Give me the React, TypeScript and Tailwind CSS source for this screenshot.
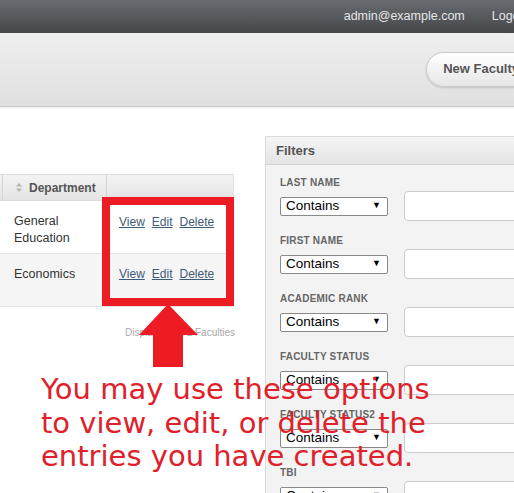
import React from "react";

const filters = ["LAST NAME", "FIRST NAME", "ACADEMIC RANK", "FACULTY STATUS", "FACULTY STATUS2", "TBI"];

function SortIcon() {
  return (
    <svg width="6" height="9" viewBox="0 0 6 9" className="mr-[7px]">
      <polygon points="3,0 6,3.5 0,3.5" fill="#b5b5b5" />
      <polygon points="0,5.5 6,5.5 3,9" fill="#b5b5b5" />
    </svg>
  );
}

function Links() {
  return (
    <div className="flex gap-[7px] text-[12px] leading-[17px] text-[#3d5a77] underline">
      <span>View</span>
      <span>Edit</span>
      <span>Delete</span>
    </div>
  );
}

export default function App() {
  return (
    <div
      className="relative w-[514px] h-[493px] overflow-hidden bg-white"
      style={{ fontFamily: '"Liberation Sans", Arial, sans-serif' }}
    >
      {/* top bar */}
      <div className="h-[33px] bg-gradient-to-b from-[#686c71] to-[#45474a] flex items-center justify-end gap-[27px] mr-[-16px] text-[12.5px] text-[#e6e6e6]">
        <span>admin@example.com</span>
        <span>Logout</span>
      </div>

      {/* header band */}
      <div className="h-[74px] bg-gradient-to-b from-[#efefef] to-[#e0e0e0] border-b border-[#c8c8c8] shadow-[0_1px_2px_rgba(0,0,0,0.08)] flex items-center justify-end mr-[-26px]">
        <div className="h-[35px] mt-[-1px] rounded-[18px] border border-[#c9c9c9] bg-gradient-to-b from-white to-[#e6e6e6] shadow-[0_1px_2px_rgba(0,0,0,0.15)] flex items-center pl-[16px] pr-[20px] text-[13px] font-bold text-[#555]">
          New Faculty
        </div>
      </div>

      {/* main */}
      <div className="flex">
        {/* left: table */}
        <div className="w-[265px] shrink-0 pt-[67px]">
          <div className="w-[234px] border-r border-[#e2e2e2]">
            <div className="flex h-[27px] bg-gradient-to-b from-[#f4f4f4] to-[#e3e3e3] border-y border-[#dcdcdc] text-[12px] font-bold text-[#555]">
              <div className="w-[3px] border-r border-[#d6d6d6]" />
              <div className="w-[104px] flex items-center pl-[13px] border-r border-[#d6d6d6]">
                <SortIcon />
                Department
              </div>
              <div className="flex-1" />
            </div>
            <div className="flex h-[53px] bg-white border-b border-[#e6e6e6]">
              <div className="w-[3px]" />
              <div className="w-[104px] pl-[11px] pt-[12px] text-[12.5px] leading-[17px] text-[#333]">
                General
                <br />
                Education
              </div>
              <div className="flex-1 pl-[12px] pt-[13px]">
                <Links />
              </div>
            </div>
            <div className="flex h-[53px] bg-[#f5f5f5] border-b border-[#e2e2e2]">
              <div className="w-[3px]" />
              <div className="w-[104px] pl-[11px] pt-[12px] text-[12.5px] leading-[17px] text-[#333]">Economics</div>
              <div className="flex-1 pl-[12px] pt-[12px]">
                <Links />
              </div>
            </div>
          </div>
          <div className="w-[235px] text-right text-[10px] text-[#a9a9a9] mt-[18px]">Displaying all 2 Faculties</div>
        </div>

        {/* right: filters */}
        <div className="mt-[29px] w-[300px] shrink-0 border-l border-t border-[#dadada] bg-[#f3f3f3] h-[400px]">
          <div className="h-[28px] bg-gradient-to-b from-[#f5f5f5] to-[#e4e4e4] border-b border-[#d3d3d3] flex items-center pl-[10px] text-[13px] font-bold text-[#555]">
            Filters
          </div>
          <div className="pl-[14px] pt-[12px] flex flex-col gap-[14px]">
            {filters.map((f) => (
              <div key={f} className="flex flex-col gap-[2px]">
                <div className="h-[12px] text-[10px] leading-[12px] font-bold text-[#666] tracking-[0.2px]">{f}</div>
                <div className="flex items-center h-[30px]">
                  <div className="w-[108px] h-[19px] border border-[#8a8a8a] rounded-[2px] bg-white flex items-center justify-between pl-[5px] pr-[6px] text-[13.5px] text-black">
                    <span>Contains</span>
                    <span className="text-[9px]">▼</span>
                  </div>
                  <div className="ml-[16px] w-[130px] h-[30px] rounded-[4px] border border-[#cccccc] bg-white" />
                </div>
              </div>
            ))}
          </div>
        </div>
      </div>

      {/* annotation overlay */}
      <div className="absolute left-[102px] top-[197px] w-[132px] h-[109px] border-[8px] border-[#ed1c24]" />
      <svg className="absolute left-[139px] top-[304px]" width="60" height="64" viewBox="0 0 60 64">
        <polygon points="29,0 59,31 44,31 44,63 14,63 14,31 0,31" fill="#ed1c24" />
      </svg>
      <div
        className="absolute left-[41px] top-[373px] text-[29px] leading-[33.5px] text-[#e0202a] whitespace-nowrap"
        style={{ fontFamily: '"DejaVu Sans", Verdana, sans-serif' }}
      >
        You may use these options
        <br />
        to view, edit, or delete the
        <br />
        entries you have created.
      </div>
    </div>
  );
}
